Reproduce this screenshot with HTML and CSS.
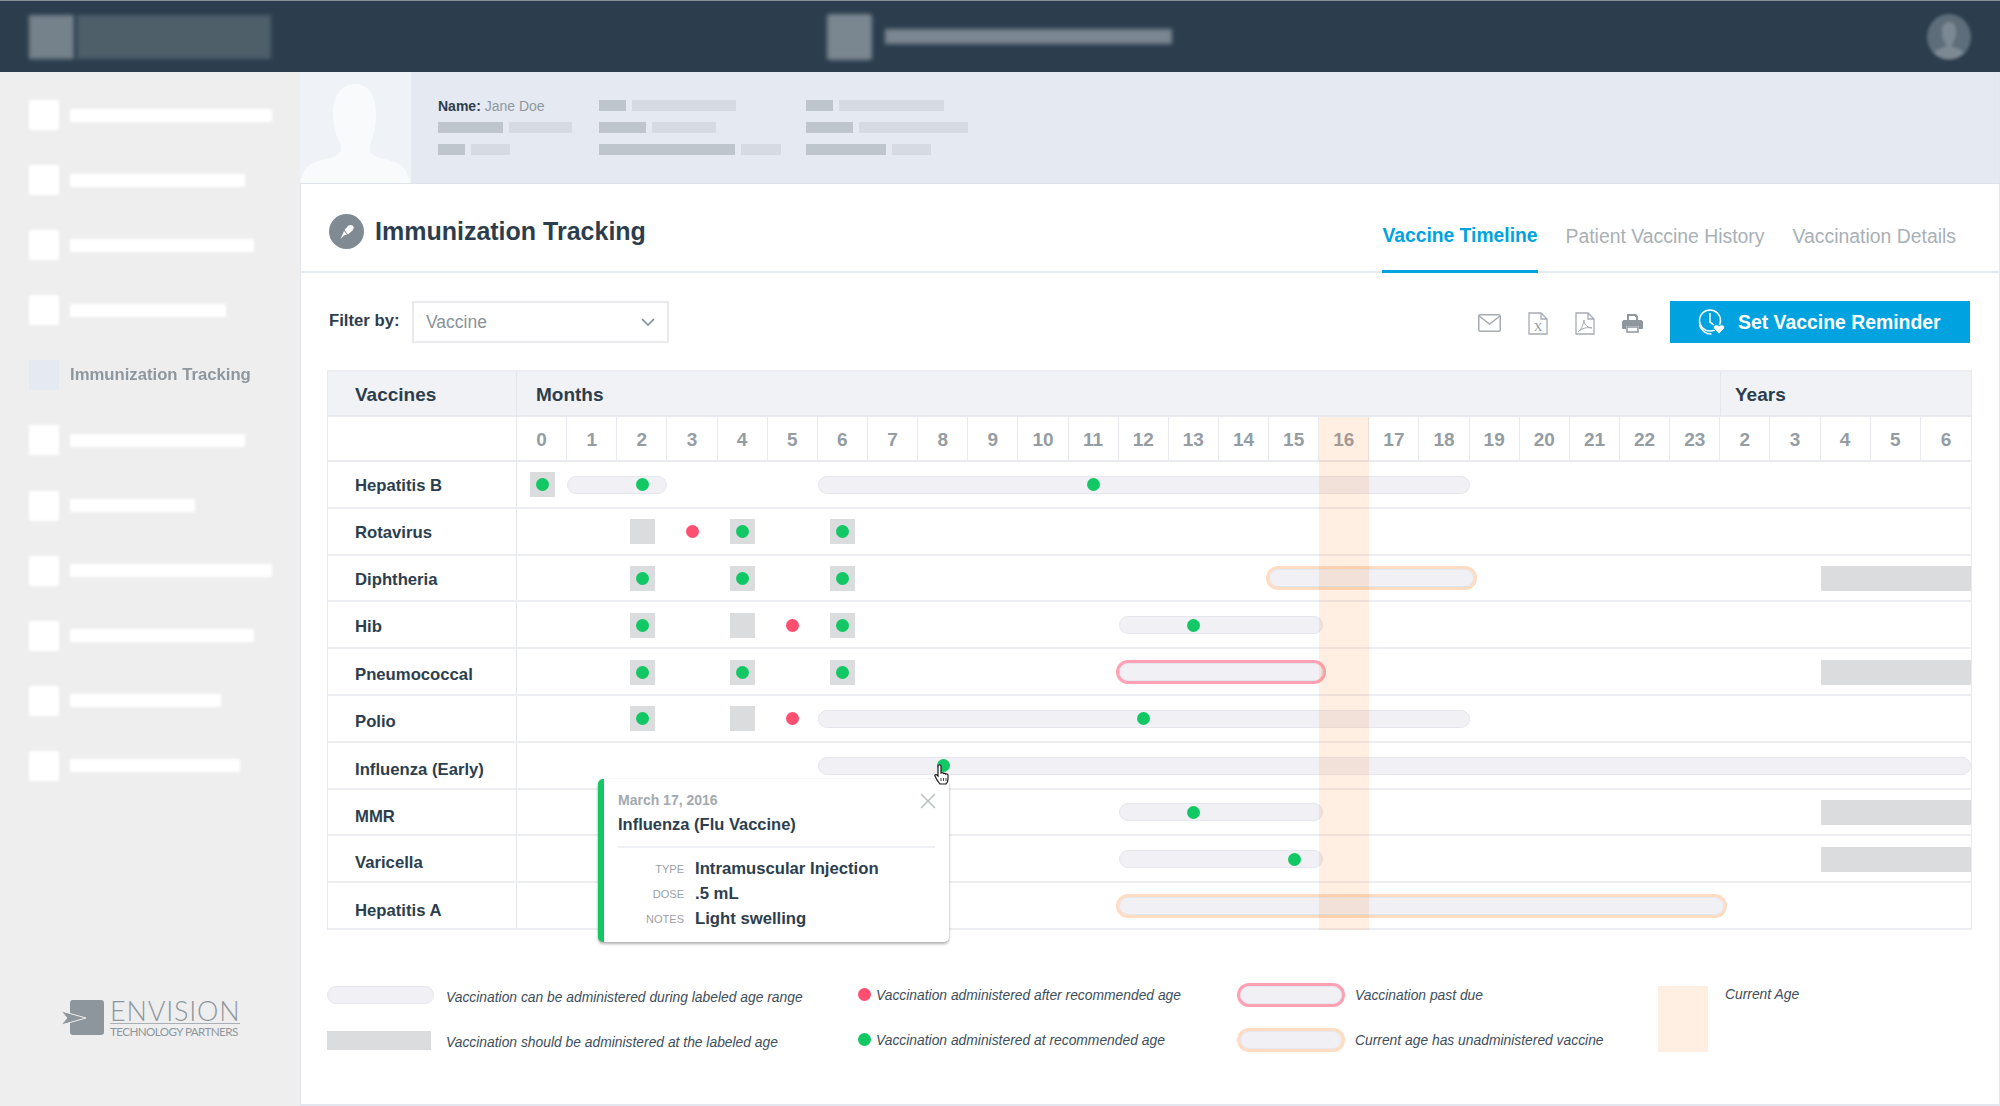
FILE: index.html
```html
<!DOCTYPE html>
<html lang="en">
<head>
    <meta charset="UTF-8">
    <title>Immunization Tracking</title>
    <link rel="stylesheet" href="styles.css">
</head>
<body>
    <header class="topbar">
        <div class="brand">
            <span class="blur-block brand-mark"></span>
            <span class="blur-block brand-name"></span>
        </div>
        <div class="app-title">
            <span class="blur-block app-mark"></span>
            <span class="blur-block app-name"></span>
        </div>
        <svg class="user-photo" viewBox="0 0 46 46" width="46" height="46">
            <ellipse cx="23" cy="23" rx="22" ry="23" fill="#5d6d79"/>
            <path d="M23 8c5 0 7 4 7 10s-2 10-4 12v2c4 2 10 3 12 7-4 4-9 6-15 6s-11-2-15-6c2-4 8-5 12-7v-2c-2-2-4-6-4-12s2-10 7-10z" fill="#7c8892"/>
        </svg>
    </header>

    <div class="layout">
        <nav class="sidebar">
            <div class="nav-item"><span class="nav-icon"></span><span class="nav-line w202"></span></div>
            <div class="nav-item"><span class="nav-icon"></span><span class="nav-line w175"></span></div>
            <div class="nav-item"><span class="nav-icon"></span><span class="nav-line w184"></span></div>
            <div class="nav-item"><span class="nav-icon"></span><span class="nav-line w156"></span></div>
            <div class="nav-item active"><span class="nav-icon"></span><span class="nav-label">Immunization Tracking</span></div>
            <div class="nav-item"><span class="nav-icon"></span><span class="nav-line w175"></span></div>
            <div class="nav-item"><span class="nav-icon"></span><span class="nav-line w125"></span></div>
            <div class="nav-item"><span class="nav-icon"></span><span class="nav-line w202"></span></div>
            <div class="nav-item"><span class="nav-icon"></span><span class="nav-line w184"></span></div>
            <div class="nav-item"><span class="nav-icon"></span><span class="nav-line w151"></span></div>
            <div class="nav-item"><span class="nav-icon"></span><span class="nav-line w170"></span></div>

            <div class="logo">
                <svg class="logo-mark" viewBox="0 0 43 36" width="43" height="36">
                    <rect x="9" y="0" width="34" height="35" rx="3" fill="#8d969d"/>
                    <path d="M0 11l25 7-25 7 6-7z" fill="#8d969d" stroke="#eeeeee" stroke-width="1"/>
                </svg>
                <div class="logo-text">
                    <div class="logo-name">ENVISION</div>
                    <div class="logo-sub">TECHNOLOGY PARTNERS</div>
                </div>
            </div>
        </nav>

        <main class="main">
            <section class="patient">
                <div class="patient-photo">
                    <svg viewBox="0 0 111 111" width="111" height="111">
                        <path d="M55 12c12 0 21 10 21 30 0 14-3 24-6 31-1 7 2 11 10 13 14 3 24 6 27 15l4 10H0l3-10c4-9 13-12 27-15 8-2 12-6 11-13-4-7-8-17-8-31 0-20 10-30 22-30z" fill="#f9fafb"/>
                    </svg>
                </div>
                <div class="patient-col col-a">
                    <div class="patient-name"><b>Name:</b> Jane Doe</div>
                    <div class="patient-row"><span class="ph dark w65"></span><span class="ph w63"></span></div>
                    <div class="patient-row"><span class="ph dark w27"></span><span class="ph w39"></span></div>
                </div>
                <div class="patient-col col-b">
                    <div class="patient-row"><span class="ph dark w27"></span><span class="ph w104"></span></div>
                    <div class="patient-row"><span class="ph dark w47"></span><span class="ph w64"></span></div>
                    <div class="patient-row"><span class="ph dark w136"></span><span class="ph w40"></span></div>
                </div>
                <div class="patient-col">
                    <div class="patient-row"><span class="ph dark w27"></span><span class="ph w105"></span></div>
                    <div class="patient-row"><span class="ph dark w47"></span><span class="ph w109"></span></div>
                    <div class="patient-row"><span class="ph dark w80"></span><span class="ph w39"></span></div>
                </div>
            </section>

            <section class="page-head">
                <div class="page-title">
                    <svg viewBox="0 0 35 35" width="35" height="35">
                        <circle cx="17.5" cy="17.5" r="17.5" fill="#7f8a92"/>
                        <path d="M19.5 11.5c2-1 3.500-.5 4.500.5s1 2.500-.5 4.500l-4.500 4-3.500-4.500zM15 17l3 3.500-3 1-3.500 3.500 2-4.500z" fill="#fff"/>
                    </svg>
                    <h1>Immunization Tracking</h1>
                </div>
                <div class="tabs">
                    <a class="tab active">Vaccine Timeline</a>
                    <a class="tab">Patient Vaccine History</a>
                    <a class="tab">Vaccination Details</a>
                </div>
            </section>

            <section class="toolbar">
                <label class="filter-label">Filter by:</label>
                <div class="select">
                    <span>Vaccine</span>
                    <svg viewBox="0 0 14 8" width="14" height="8"><path d="M1 1l6 6 6-6" fill="none" stroke="#7f8a92" stroke-width="1.600"/></svg>
                </div>
                <div class="tools">
                    <svg viewBox="0 0 23 18" width="23" height="18"><rect x=".75" y=".75" width="21.500" height="16.500" rx="1.500" fill="none" stroke="#a6acb2" stroke-width="1.500"/><path d="M1 2l10.500 8L22 2" fill="none" stroke="#a6acb2" stroke-width="1.500"/></svg>
                    <svg viewBox="0 0 20 23" width="20" height="23"><path d="M1 1h12l6 6v15H1zM13 1v6h6" fill="none" stroke="#a6acb2" stroke-width="1.300"/><text x="10" y="19" class="doc-x">X</text></svg>
                    <svg viewBox="0 0 20 23" width="20" height="23"><path d="M1 1h12l6 6v15H1zM13 1v6h6" fill="none" stroke="#a6acb2" stroke-width="1.300"/><path d="M3 20c3-2 5-6 6-12 0 4 2 7 8 8-5-1-10 0-14 4z" fill="none" stroke="#a6acb2"/></svg>
                    <svg viewBox="0 0 21 20" width="21" height="20"><path d="M5 7V1h9l2 2v4h3c1 0 2 1 2 2v6c0 1-1 1-2 1h-2v-3H4v3H2c-1 0-2 0-2-1V9c0-1 1-2 2-2zM7 3v4h7V4h-1V3z" fill="#8f979e"/><path d="M5 14h11v5H5z" fill="none" stroke="#8f979e" stroke-width="1.500"/></svg>
                </div>
                <button class="reminder">
                    <svg viewBox="0 0 28 26" width="28" height="26">
                        <circle cx="12" cy="11.500" r="10.500" fill="none" stroke="#fff" stroke-width="1.500"/>
                        <path d="M1.500 16c2 6 6 9 12 9M12 4v9l4 3" fill="none" stroke="#fff" stroke-width="1.500"/>
                        <path d="M21 25l-5-5c-2-3 2-6 5-3 3-3 7 0 5 3z" fill="#fff" stroke="#00a3e0"/>
                    </svg>
                    <span>Set Vaccine Reminder</span>
                </button>
            </section>

            <section class="timeline">
                <div class="tl-head">
                    <div class="th-name">Vaccines</div>
                    <div class="th-months">Months</div>
                    <div class="th-years">Years</div>
                </div>
                <div class="tl-ages">
                    <div class="age-blank"></div>
                    <div>0</div><div>1</div><div>2</div><div>3</div><div>4</div><div>5</div><div>6</div><div>7</div>
                    <div>8</div><div>9</div><div>10</div><div>11</div><div>12</div><div>13</div><div>14</div><div>15</div>
                    <div>16</div><div>17</div><div>18</div><div>19</div><div>20</div><div>21</div><div>22</div><div>23</div>
                    <div>2</div><div>3</div><div>4</div><div>5</div><div>6</div>
                </div>

                <div class="tl-row">
                    <div class="vaccine">Hepatitis B</div>
                    <span class="due at-0"><i class="dot ok"></i></span>
                    <span class="range from-1-2"></span><i class="dot ok at-2"></i>
                    <span class="range from-6-18"></span><i class="dot ok at-11"></i>
                </div>
                <div class="tl-row">
                    <div class="vaccine">Rotavirus</div>
                    <span class="due at-2"></span>
                    <i class="dot late at-3"></i>
                    <span class="due at-4"><i class="dot ok"></i></span>
                    <span class="due at-6"><i class="dot ok"></i></span>
                </div>
                <div class="tl-row">
                    <div class="vaccine">Diphtheria</div>
                    <span class="due at-2"><i class="dot ok"></i></span>
                    <span class="due at-4"><i class="dot ok"></i></span>
                    <span class="due at-6"><i class="dot ok"></i></span>
                    <span class="range from-15-18 pending"></span>
                    <span class="due from-y4"></span>
                </div>
                <div class="tl-row">
                    <div class="vaccine">Hib</div>
                    <span class="due at-2"><i class="dot ok"></i></span>
                    <span class="due at-4"></span>
                    <i class="dot late at-5"></i>
                    <span class="due at-6"><i class="dot ok"></i></span>
                    <span class="range from-12-15 over"></span><i class="dot ok at-13"></i>
                </div>
                <div class="tl-row">
                    <div class="vaccine">Pneumococcal</div>
                    <span class="due at-2"><i class="dot ok"></i></span>
                    <span class="due at-4"><i class="dot ok"></i></span>
                    <span class="due at-6"><i class="dot ok"></i></span>
                    <span class="range from-12-15 over past"></span>
                    <span class="due from-y4"></span>
                </div>
                <div class="tl-row">
                    <div class="vaccine">Polio</div>
                    <span class="due at-2"><i class="dot ok"></i></span>
                    <span class="due at-4"></span>
                    <i class="dot late at-5"></i>
                    <span class="range from-6-18"></span><i class="dot ok at-12"></i>
                </div>
                <div class="tl-row">
                    <div class="vaccine">Influenza (Early)</div>
                    <span class="range from-6-end"></span><i class="dot ok at-8"></i>
                </div>
                <div class="tl-row">
                    <div class="vaccine">MMR</div>
                    <span class="range from-12-15 over"></span><i class="dot ok at-13"></i>
                    <span class="due from-y4"></span>
                </div>
                <div class="tl-row">
                    <div class="vaccine">Varicella</div>
                    <span class="range from-12-15 over"></span><i class="dot ok at-15"></i>
                    <span class="due from-y4"></span>
                </div>
                <div class="tl-row">
                    <div class="vaccine">Hepatitis A</div>
                    <span class="range from-12-23 pending"></span>
                </div>

                <div class="current-age"></div>

                <div class="popover">
                    <svg class="popover-close" viewBox="0 0 16 16" width="16" height="16"><path d="M1 1l14 14M15 1L1 15" stroke="#bcc1c5" stroke-width="1.600"/></svg>
                    <div class="popover-date">March 17, 2016</div>
                    <div class="popover-title">Influenza (Flu Vaccine)</div>
                    <dl class="popover-list">
                        <dt>TYPE</dt><dd>Intramuscular Injection</dd>
                        <dt>DOSE</dt><dd>.5 mL</dd>
                        <dt>NOTES</dt><dd>Light swelling</dd>
                    </dl>
                </div>

                <svg class="cursor" viewBox="0 0 16 21" width="16" height="21">
                    <path d="M5 1c1-.5 2 0 2 1v7l1-.5c1 0 1.500.5 1.500 1 1-.5 2 0 2 .5 1-.5 2.500 0 2.500 1v4c0 2-1 4-2 5H6c-1-1-2-3-3-4L1 12c-.5-1 1-2 2-1l1 1V2c0-.5.5-1 1-1z" fill="#fff" stroke="#1b1b1b" stroke-width="1.200"/>
                    <path d="M7 14v3M9.500 14v3M12 14v3" stroke="#1b1b1b" stroke-width=".8"/>
                </svg>
            </section>

            <section class="legend">
                <div class="legend-col col-ranges">
                    <div class="legend-item"><span class="swatch"><span class="range"></span></span>Vaccination can be administered during labeled age range</div>
                    <div class="legend-item"><span class="swatch"><span class="due"></span></span>Vaccination should be administered at the labeled age</div>
                </div>
                <div class="legend-col col-dots">
                    <div class="legend-item"><i class="dot late"></i>Vaccination administered after recommended age</div>
                    <div class="legend-item"><i class="dot ok"></i>Vaccination administered at recommended age</div>
                </div>
                <div class="legend-col col-rings">
                    <div class="legend-item"><span class="swatch"><span class="range past"></span></span>Vaccination past due</div>
                    <div class="legend-item"><span class="swatch"><span class="range pending"></span></span>Current age has unadministered vaccine</div>
                </div>
                <div class="legend-current">
                    <span class="current-swatch"></span>
                    <span>Current Age</span>
                </div>
            </section>
        </main>
    </div>
</body>
</html>
```

FILE: styles.css
```css
* {
    box-sizing: border-box;
}
html, body {
    margin: 0;
    height: 1106px;
    overflow: hidden;
}
body {
    font-family: "Liberation Sans", Arial, sans-serif;
    color: #2c3e4e;
    background: #fff;
}

/* top bar */
.topbar {
    height: 72px;
    background: #2c3e4e;
    border-top: 1px solid #868f96;
    display: flex;
    align-items: center;
    padding: 0 28px 0 29px;
}
.blur-block {
    display: block;
    filter: blur(2px);
}
.brand {
    display: flex;
    gap: 3px;
    width: 798px;
}
.brand-mark {
    width: 45px;
    height: 44px;
    background: #75828b;
}
.brand-name {
    width: 194px;
    height: 44px;
    background: #4e5f6a;
}
.app-title {
    display: flex;
    align-items: center;
    gap: 13px;
}
.app-mark {
    width: 45px;
    height: 46px;
    background: #7a8690;
    border-radius: 3px;
}
.app-name {
    width: 287px;
    height: 15px;
    background: #7a8690;
}
.user-photo {
    margin-left: auto;
    filter: blur(1.5px);
}

.layout {
    display: flex;
    height: 1034px;
}

/* sidebar */
.sidebar {
    width: 300px;
    flex: none;
    background: #eeeeee;
    padding: 28px 0 68px 29px;
    display: flex;
    flex-direction: column;
}
.nav-item {
    display: flex;
    align-items: center;
    gap: 11px;
    height: 30px;
    margin-bottom: 35.1px;
}
.nav-icon {
    width: 30px;
    height: 30px;
    background: #fff;
    filter: blur(1.5px);
}
.nav-line {
    height: 13px;
    background: #fff;
    filter: blur(1.5px);
}
.w202 { width: 202px; }
.w175 { width: 175px; }
.w184 { width: 184px; }
.w156 { width: 156px; }
.w125 { width: 125px; }
.w151 { width: 151px; }
.w170 { width: 170px; }
.nav-item.active .nav-icon {
    background: #e5e9f1;
    filter: blur(.5px);
}
.nav-label {
    font-size: 16.7px;
    font-weight: bold;
    color: #8e979e;
    filter: blur(.4px);
}
.logo {
    margin-top: auto;
    margin-left: 32px;
    display: flex;
    align-items: flex-start;
    gap: 6px;
    color: #8d969d;
}
.logo-name {
    font-family: Lato, "Liberation Sans", sans-serif;
    font-weight: 300;
    font-size: 27px;
    line-height: 22px;
    letter-spacing: .8px;
    border-bottom: 1px solid #a9b0b5;
    padding-bottom: 1px;
}
.logo-sub {
    font-family: Lato, "Liberation Sans", sans-serif;
    font-size: 11.6px;
    line-height: 13px;
    letter-spacing: -.55px;
    margin-top: 1px;
}

/* patient strip */
.main {
    flex: 1;
    min-width: 0;
    border-left: 1px solid #e3e6ee;
    border-right: 1px solid #e3e6ee;
    border-bottom: 2px solid #e3e6ee;
}
.patient {
    height: 112px;
    margin-left: -1px;
    background: #e5e9f1;
    display: flex;
    border-bottom: 1px solid #dfe3ea;
}
.patient-photo {
    width: 111px;
    height: 111px;
    background: #eff2f6;
}
.patient-photo svg {
    display: block;
}
.patient-col {
    padding: 28px 0 0 27px;
    display: flex;
    flex-direction: column;
    gap: 11px;
    width: 161px;
}
.patient-col + .patient-col {
    width: 207px;
    padding-left: 0;
}
.patient-col.col-a {
    width: 188px;
}
.patient-name {
    height: 11px;
    line-height: 12px;
    font-size: 14px;
    color: #8f989f;
    white-space: nowrap;
}
.patient-name b {
    color: #2c3e4e;
}
.patient-row {
    display: flex;
    gap: 6px;
    height: 11px;
}
.ph {
    height: 11px;
    background: #d6dbe3;
    filter: blur(.7px);
}
.ph.dark {
    background: #bfc5cd;
}
.w27 { width: 27px; }
.w39 { width: 39px; }
.w40 { width: 40px; }
.w47 { width: 47px; }
.w63 { width: 63px; }
.w64 { width: 64px; }
.w65 { width: 65px; }
.w80 { width: 80px; }
.w104 { width: 104px; }
.w105 { width: 105px; }
.w109 { width: 109px; }
.w136 { width: 136px; }

/* title + tabs */
.page-head {
    height: 89px;
    display: flex;
    justify-content: space-between;
    padding: 0 43px 0 28px;
    border-bottom: 2px solid #e5e9f1;
}
.page-title {
    display: flex;
    align-items: center;
    gap: 11px;
    padding-top: 7px;
}
.page-title h1 {
    margin: 0;
    font-size: 25px;
    font-weight: bold;
}
.tabs {
    display: flex;
    gap: 28px;
    margin-bottom: -2px;
}
.tab {
    align-self: flex-end;
    font-size: 19.4px;
    line-height: 24px;
    padding-bottom: 22px;
    color: #a9b0b6;
    border-bottom: 3px solid transparent;
}
.tab.active {
    color: #00a3e0;
    font-size: 19.3px;
    font-weight: bold;
    border-bottom-color: #00a3e0;
}

/* filter row */
.toolbar {
    height: 42px;
    margin: 28px 29px 27px 28px;
    display: flex;
    align-items: center;
}
.filter-label {
    font-size: 16.7px;
    font-weight: bold;
    width: 83px;
    padding-bottom: 2px;
}
.select {
    width: 257px;
    height: 42px;
    border: 2px solid #e8eaee;
    display: flex;
    align-items: center;
    justify-content: space-between;
    padding: 0 12px;
    font-size: 17.5px;
    color: #8a9299;
}
.tools {
    margin-left: auto;
    display: flex;
    align-items: center;
    gap: 27px;
    margin-right: 27px;
    padding-top: 2px;
}
.doc-x {
    font-family: "Liberation Serif", serif;
    font-size: 12px;
    fill: #8f979e;
    text-anchor: middle;
}
.reminder {
    width: 300px;
    height: 42px;
    border: none;
    background: #00a3e0;
    color: #fff;
    font-family: inherit;
    font-size: 19.4px;
    font-weight: bold;
    display: flex;
    align-items: center;
    gap: 12px;
    padding: 0 0 0 28px;
}
.reminder span {
    padding-top: 1px;
}

/* timeline table */
.timeline {
    position: relative;
    margin: 0 27px 0 26px;
    border-left: 1px solid #e8eaef;
    border-right: 1px solid #e8eaef;
}
.tl-head {
    height: 47px;
    background: #f1f2f6;
    border-top: 2px solid #ebedf1;
    border-bottom: 2px solid #e8eaef;
    display: grid;
    grid-template-columns: 189px 1fr 250px;
    font-size: 19px;
    font-weight: bold;
    line-height: 45px;
}
.th-name {
    padding-left: 27px;
    border-right: 1px solid #e3e6ea;
}
.th-months {
    padding-left: 19px;
    border-right: 1px solid #e3e6ea;
}
.th-years {
    padding-left: 14px;
}
.tl-ages {
    height: 45px;
    display: grid;
    grid-template-columns: 189px repeat(29, 1fr);
    border-bottom: 2px solid #e8eaef;
    font-size: 19px;
    font-weight: bold;
    color: #959da4;
    text-align: center;
    line-height: 45px;
}
.tl-ages > div {
    border-right: 1px solid #e8eaef;
}
.tl-ages > div:last-child {
    border-right: none;
}
.tl-row {
    height: 46.8px;
    display: grid;
    grid-template-columns: 189px repeat(29, 1fr);
    grid-template-rows: 1fr;
    align-items: center;
    padding-top: 1px;
    border-bottom: 2px solid #eceef2;
}
.tl-row > * {
    grid-row: 1;
}
.vaccine {
    grid-column: 1;
    align-self: stretch;
    margin-top: -1px;
    padding-left: 27px;
    padding-top: 9px;
    font-size: 16.7px;
    font-weight: bold;
    line-height: 30px;
    border-right: 1px solid #e3e6ea;
}
.tl-row:nth-child(n+6) .vaccine { padding-top: 10px; }
.tl-row:nth-child(n+7) .vaccine { padding-top: 11px; }
.tl-row:nth-child(n+9) .vaccine { padding-top: 12px; }
.tl-row:nth-child(n+12) .vaccine { padding-top: 13px; }

.dot {
    display: block;
    width: 13px;
    height: 13px;
    border-radius: 50%;
    justify-self: center;
}
.dot.ok { background: #12c864; }
.dot.late { background: #ff4f70; }
.due {
    display: flex;
    align-items: center;
    justify-content: center;
    height: 25px;
    width: 25px;
    background: #dbdcde;
    justify-self: center;
}
.due.from-y4 {
    width: auto;
    justify-self: stretch;
}
.range {
    display: block;
    height: 18px;
    background: #f0f0f5;
    border: 1px solid #e6e7ee;
    border-radius: 9px;
}
.range.over,
.range.pending {
    margin-right: -4px;
}
.range.pending {
    box-shadow: 0 0 0 3px #ffdcc2;
}
.range.past {
    box-shadow: 0 0 0 3px #ffa1b2;
}

.at-0 { grid-column: 2; }
.at-2 { grid-column: 4; }
.at-3 { grid-column: 5; }
.at-4 { grid-column: 6; }
.at-5 { grid-column: 7; }
.at-6 { grid-column: 8; }
.at-8 { grid-column: 10; }
.at-11 { grid-column: 13; }
.at-12 { grid-column: 14; }
.at-13 { grid-column: 15; }
.at-15 { grid-column: 17; }
.from-1-2 { grid-column: 3 / 5; }
.from-6-18 { grid-column: 8 / 21; }
.from-12-15 { grid-column: 14 / 18; }
.from-15-18 { grid-column: 17 / 21; }
.from-12-23 { grid-column: 14 / 26; }
.from-6-end { grid-column: 8 / 31; }
.from-y4 { grid-column: 28 / 31; }

.current-age {
    position: absolute;
    top: 47px;
    bottom: 0;
    left: calc(189px + (100% - 189px) * 16 / 29);
    width: calc((100% - 189px) / 29);
    background: rgba(255, 143, 60, .15);
    pointer-events: none;
}

.popover {
    position: absolute;
    left: 270px;
    top: 409px;
    width: 351px;
    height: 163px;
    background: #fff;
    border-left: 6px solid #12c864;
    border-radius: 5px;
    box-shadow: 0 2px 3px rgba(0, 0, 0, .3), 0 0 2px rgba(0, 0, 0, .08);
    padding: 13px 14px 0 14px;
}
.popover-close {
    position: absolute;
    top: 14px;
    right: 13px;
}
.popover-date {
    font-size: 14px;
    line-height: 17px;
    font-weight: bold;
    color: #a3a9af;
}
.popover-title {
    font-size: 16.5px;
    line-height: 20px;
    font-weight: bold;
    margin-top: 5px;
    padding-bottom: 12px;
    border-bottom: 2px solid #f0f1f4;
}
.popover-list {
    margin: 11px 0 0;
    display: grid;
    grid-template-columns: 66px 1fr;
    column-gap: 11px;
    row-gap: 5px;
    align-items: center;
}
.popover-list dt {
    font-size: 11px;
    text-align: right;
    color: #9aa1a8;
}
.popover-list dd {
    margin: 0;
    font-size: 16.7px;
    line-height: 20px;
    font-weight: bold;
}
.cursor {
    position: absolute;
    left: 606px;
    top: 394px;
}

/* legend */
.legend {
    margin: 54px 0 0 26px;
    display: grid;
    grid-template-columns: 531px 379px 421px 1fr;
    font-size: 13.85px;
    font-style: italic;
    color: #3d4d5b;
}
.legend-col {
    display: flex;
    flex-direction: column;
    gap: 23px;
}
.legend-item {
    display: flex;
    align-items: center;
    height: 22px;
    white-space: nowrap;
}
.col-ranges .legend-item {
    position: relative;
    top: 2px;
}
.swatch {
    flex: none;
    width: 119px;
}
.col-ranges .swatch {
    position: relative;
    top: -2px;
}
.col-ranges .legend-item + .legend-item .swatch {
    top: -1px;
}
.col-ranges .range {
    width: 107px;
}
.col-ranges .due {
    width: 104px;
    height: 19px;
    justify-self: start;
}
.col-dots .dot {
    margin-right: 5px;
}
.col-rings .swatch {
    width: 118px;
    padding-left: 3px;
}
.col-rings .range {
    width: 102px;
}
.legend-current {
    display: flex;
    gap: 17px;
    line-height: 20px;
}
.current-swatch {
    width: 50px;
    height: 66px;
    margin-top: 2px;
    background: #ffeee2;
}
```
